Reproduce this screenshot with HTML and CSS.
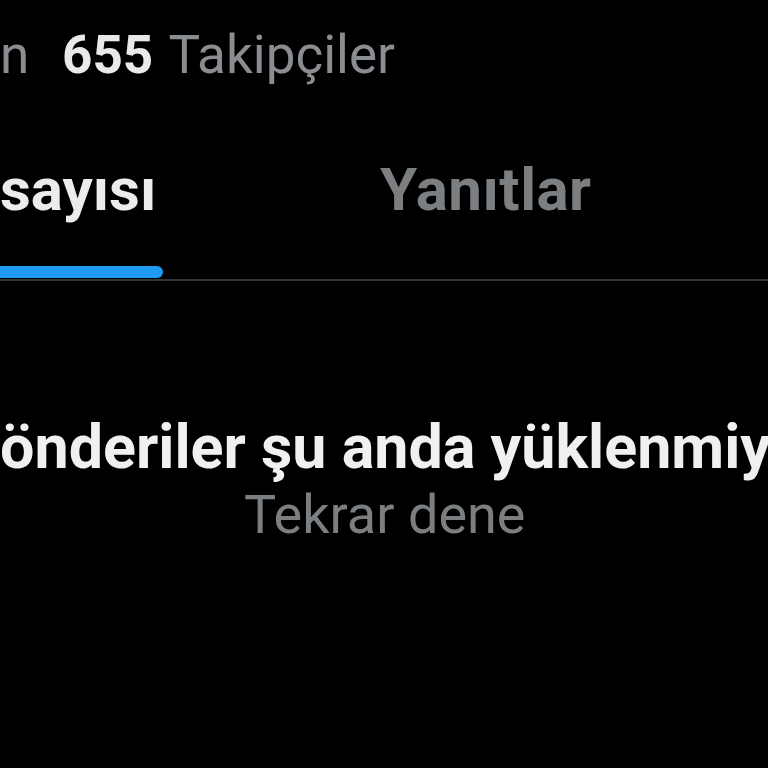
FILE: index.html
```html
<!DOCTYPE html>
<html lang="tr">
<head>
<meta charset="utf-8">
<link rel="stylesheet" href="styles.css">
</head>
<body>
<div class="page">
  <div class="stats">
    <span class="stat-tail">n</span>
    <span class="stat"><b class="num">655</b> <span class="label">Takipçiler</span></span>
  </div>
  <div class="tabs">
    <div class="tab active"><span class="tab-label">sayısı</span></div>
    <div class="tab"><span class="tab-label">Yanıtlar</span></div>
    <div class="tab-rest"></div>
  </div>
  <div class="empty">
    <div class="empty-title">önderiler şu anda yüklenmiyor.</div>
    <div class="empty-retry">Tekrar dene</div>
  </div>
</div>
</body>
</html>
```
FILE: styles.css
```css
html, body {
  margin: 0;
  padding: 0;
  background: #000;
}
.page {
  width: 768px;
  height: 768px;
  overflow: hidden;
  font-family: Roboto, "Liberation Sans", sans-serif;
  color: #e7e9ea;
}
.stats {
  display: flex;
  align-items: baseline;
  height: 110px;
  padding-top: 25px;
  box-sizing: border-box;
  font-size: 53px;
  line-height: 60px;
  white-space: nowrap;
}
.stat-tail {
  color: #8a8d91;
  width: 62px;
}
.num {
  font-weight: 700;
  color: #e7e9ea;
}
.label {
  color: #8a8d91;
  margin-left: 2px;
}
.tabs {
  display: flex;
  height: 171px;
  font-size: 60px;
  font-weight: 700;
}
.tab {
  display: flex;
  flex-direction: column;
  justify-content: flex-start;
  padding-top: 50px;
  box-sizing: border-box;
  border-bottom: 2px solid #2f3336;
  position: relative;
}
.tab.active {
  width: 163px;
  color: #ececec;
}
.tab.active::after {
  content: "";
  position: absolute;
  left: -10px;
  right: 0;
  bottom: 1px;
  height: 12px;
  border-radius: 6px;
  background: #1d9bf0;
}
.tab:not(.active) {
  width: 380px;
  padding-left: 217px;
  color: #7c7f82;
  letter-spacing: 0.5px;
}
.tab-rest {
  flex: 1;
  border-bottom: 2px solid #2f3336;
}
.tab-label {
  line-height: 60px;
}
.empty {
  padding-top: 133px;
  display: flex;
  flex-direction: column;
}
.empty-title {
  font-size: 61px;
  font-weight: 700;
  white-space: nowrap;
  line-height: 66px;
  color: #f0f0f0;
}
.empty-retry {
  font-size: 54px;
  line-height: 62px;
  margin-top: 4px;
  color: #7c7f82;
  padding-left: 244px;
}
```
